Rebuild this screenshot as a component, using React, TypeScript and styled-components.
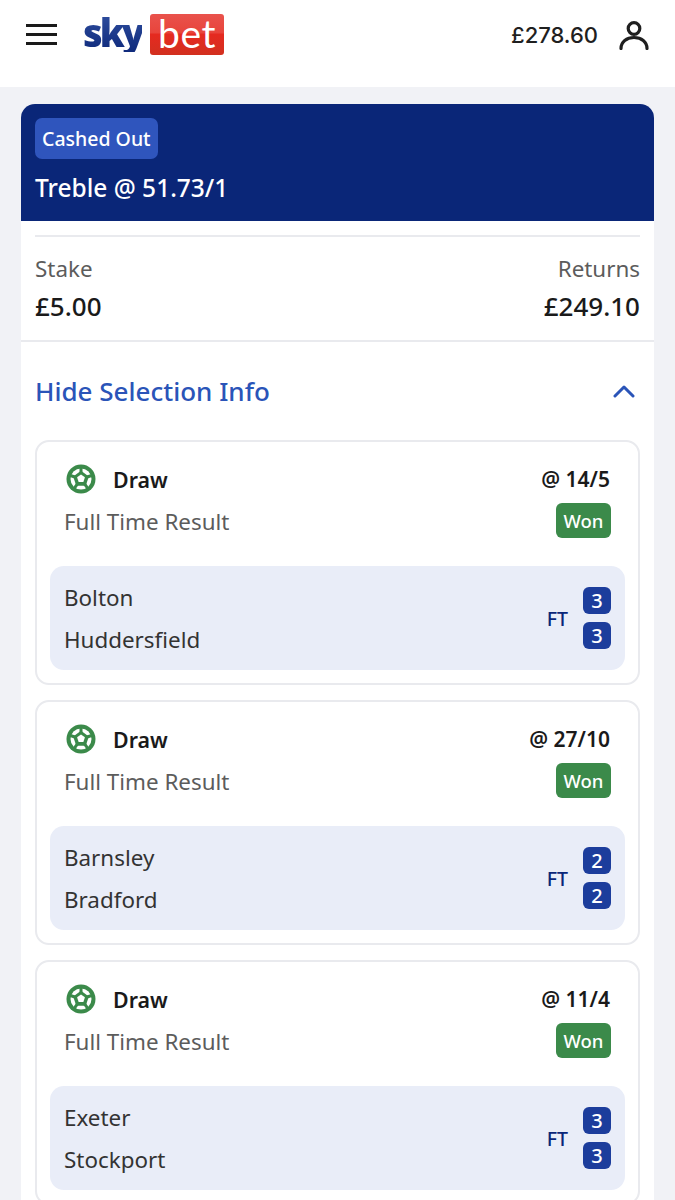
import React from "react";
import styled, { createGlobalStyle } from "styled-components";

const GlobalStyle = createGlobalStyle`
  html, body {
    margin: 0;
    padding: 0;
    height: 1200px;
    overflow: hidden;
    background: #f1f2f6;
    font-family: "Noto Sans", "Open Sans", sans-serif;
    color: #1a1a1a;
  }
`;

const Header = styled.header`
  height: 87px;
  background: #fff;
  display: flex;
  align-items: center;
  padding: 0 26px 18px 26px;
  box-sizing: border-box;
`;

const Burger = styled.div`
  width: 31px;
  height: 21px;
  display: flex;
  flex-direction: column;
  justify-content: space-between;
  margin-right: 26px;

  & > span {
    height: 3px;
    background: #1a1a1a;
  }
`;

const Logo = styled.div`
  display: flex;
  align-items: center;
  gap: 8px;
`;

const SkyWord = styled.span`
  width: 59px;
  font-family: "Open Sans", sans-serif;
  font-weight: 800;
  font-size: 38px;
  line-height: 40px;
  letter-spacing: -3px;
  color: #1c3a8c;
  background: linear-gradient(180deg, #2f4f9f 0%, #0f2a7c 100%);
  -webkit-background-clip: text;
  background-clip: text;
  -webkit-text-fill-color: transparent;
  margin-top: -6px;
`;

const BetWord = styled.span`
  width: 74px;
  height: 41px;
  border-radius: 3px;
  background: linear-gradient(180deg, #e9524c 0%, #e8453c 45%, #e52a20 50%, #d2301f 100%);
  color: #fff;
  font-family: "Lato", sans-serif;
  font-size: 39px;
  font-weight: 400;
  line-height: 38px;
  letter-spacing: 0.5px;
  text-align: center;
`;

const HeaderRight = styled.div`
  margin-left: auto;
  display: flex;
  align-items: center;
  gap: 21px;
`;

const Balance = styled.span`
  font-family: "Inter", sans-serif;
  font-size: 22px;
  font-weight: 500;
  color: #1f1f1f;
`;

const Content = styled.main`
  padding: 17px 21px 0;
`;

const BetCard = styled.section`
  background: #fff;
  border-radius: 14px 14px 0 0;
  overflow: hidden;
`;

const BetHead = styled.div`
  height: 117px;
  background: #0a2678;
  padding: 14px 14px 0;
  box-sizing: border-box;
`;

const StatusPill = styled.span`
  display: inline-block;
  height: 41px;
  line-height: 41px;
  padding: 0 7px;
  border-radius: 7px;
  background: #2f55bd;
  color: #fff;
  font-size: 19.5px;
  font-weight: 500;
`;

const BetTitle = styled.div`
  margin-top: 12px;
  color: #fff;
  font-size: 24.5px;
  line-height: 34px;
  font-weight: 500;
`;

const BetBody = styled.div`
  padding: 14px 14px 0;
`;

const Rule = styled.div`
  height: 2px;
  background: #e9eaee;
`;

const Totals = styled.div`
  display: flex;
  justify-content: space-between;
  height: 103px;
  padding-top: 16px;
  box-sizing: border-box;
`;

const TotalCol = styled.div<{ $right?: boolean }>`
  text-align: ${({ $right }) => ($right ? "right" : "left")};
`;

const TotalLabel = styled.div`
  font-size: 22.4px;
  line-height: 32px;
  color: #5c5c5c;
`;

const TotalValue = styled.div`
  font-size: 26px;
  line-height: 42px;
  font-weight: 500;
  color: #1a1a1a;
`;

const FullRule = styled(Rule)`
  margin: 0 -14px;
`;

const Toggle = styled.div`
  display: flex;
  align-items: center;
  justify-content: space-between;
  height: 98px;
  color: #2a54b8;
  font-size: 26px;
  font-weight: 500;
  padding-right: 4px;
`;

const Selections = styled.div`
  display: flex;
  flex-direction: column;
  gap: 15px;
`;

const Selection = styled.article`
  height: 245px;
  border: 2px solid #e9eaee;
  border-radius: 14px;
  box-sizing: border-box;
  padding: 0 13px;
`;

const SelectionTop = styled.div`
  display: flex;
  justify-content: space-between;
  height: 124px;
  padding: 17px 14px 0;
  box-sizing: border-box;
`;

const PickRow = styled.div`
  display: flex;
  align-items: center;
  gap: 17px;
  height: 40px;
  padding-left: 2px;
`;

const PickName = styled.span`
  font-size: 21.4px;
  font-weight: 600;
  color: #1a1a1a;
`;

const Market = styled.div`
  margin-top: 2px;
  font-size: 22.4px;
  line-height: 42px;
  color: #5c5c5c;
`;

const PriceCol = styled.div`
  display: flex;
  flex-direction: column;
  align-items: flex-end;
`;

const Price = styled.div`
  height: 40px;
  line-height: 40px;
  font-size: 21px;
  font-weight: 600;
  color: #1a1a1a;
  margin-right: 1px;
`;

const WonBadge = styled.span`
  margin-top: 4px;
  width: 55px;
  height: 35px;
  line-height: 35px;
  text-align: center;
  background: #3b8a4a;
  color: #fff;
  border-radius: 6px;
  font-size: 18.5px;
  font-weight: 500;
`;

const Match = styled.div`
  height: 104px;
  border-radius: 14px;
  background: #e9edf8;
  display: flex;
  align-items: center;
  justify-content: space-between;
  padding: 0 14px;
`;

const Teams = styled.div`
  padding-top: 2px;
  font-size: 22.4px;
  line-height: 42px;
  color: #333;
`;

const ScoreBlock = styled.div`
  display: flex;
  align-items: center;
  gap: 15px;
`;

const FullTime = styled.span`
  font-size: 19.5px;
  font-weight: 500;
  color: #0a2678;
`;

const Scores = styled.div`
  display: flex;
  flex-direction: column;
  gap: 8px;
`;

const Score = styled.span`
  width: 28px;
  height: 27px;
  line-height: 27px;
  border-radius: 6px;
  background: #1c3d9c;
  color: #fff;
  text-align: center;
  font-size: 20px;
  font-weight: 500;
`;

// green disc, white inner field, green pentagon and spokes on top
const BallIcon = () => (
  <svg width="30" height="30" viewBox="0 0 30 30">
    <circle cx="15" cy="15" r="14.5" fill="#3b8a4a" />
    <circle cx="15" cy="15" r="10.5" fill="#fff" />
    <path
      d="M15 15V3M15 15L26.4 11.3M15 15l7 9.7M15 15l-7 9.7M15 15L3.6 11.3"
      stroke="#3b8a4a"
      strokeWidth="3"
    />
    <path d="M15 6.8l7.8 5.7-3 9.2h-9.6l-3-9.2z" fill="#3b8a4a" />
    <path d="M15 10.5l3.9 2.8-1.5 4.6h-4.8l-1.5-4.6z" fill="#fff" />
  </svg>
);

const PersonIcon = () => (
  <svg width="30" height="30" viewBox="0 0 30 30" fill="none" stroke="#1f1f1f" strokeWidth="3.2" strokeLinecap="round">
    <circle cx="15" cy="8.5" r="5.8" />
    <path d="M2 28.5c0-6.8 5.6-11 13-11s13 4.2 13 11" />
  </svg>
);

const ChevronUp = () => (
  <svg width="24" height="14" viewBox="0 0 24 14" fill="none" stroke="#2a54b8" strokeWidth="3" strokeLinecap="round" strokeLinejoin="round">
    <path d="M3 12l9-9 9 9" />
  </svg>
);

const selections = [
  { price: "14/5", home: "Bolton", away: "Huddersfield", homeScore: 3, awayScore: 3 },
  { price: "27/10", home: "Barnsley", away: "Bradford", homeScore: 2, awayScore: 2 },
  { price: "11/4", home: "Exeter", away: "Stockport", homeScore: 3, awayScore: 3 },
];

export default function App(): React.ReactElement {
  return (
    <>
      <GlobalStyle />
      <Header>
        <Burger>
          <span />
          <span />
          <span />
        </Burger>
        <Logo>
          <SkyWord>sky</SkyWord>
          <BetWord>bet</BetWord>
        </Logo>
        <HeaderRight>
          <Balance>£278.60</Balance>
          <PersonIcon />
        </HeaderRight>
      </Header>
      <Content>
        <BetCard>
          <BetHead>
            <StatusPill>Cashed Out</StatusPill>
            <BetTitle>Treble @ 51.73/1</BetTitle>
          </BetHead>
          <BetBody>
            <Rule />
            <Totals>
              <TotalCol>
                <TotalLabel>Stake</TotalLabel>
                <TotalValue>£5.00</TotalValue>
              </TotalCol>
              <TotalCol $right>
                <TotalLabel>Returns</TotalLabel>
                <TotalValue>£249.10</TotalValue>
              </TotalCol>
            </Totals>
            <FullRule />
            <Toggle>
              <span>Hide Selection Info</span>
              <ChevronUp />
            </Toggle>
            <Selections>
              {selections.map((s) => (
                <Selection key={s.home}>
                  <SelectionTop>
                    <div>
                      <PickRow>
                        <BallIcon />
                        <PickName>Draw</PickName>
                      </PickRow>
                      <Market>Full Time Result</Market>
                    </div>
                    <PriceCol>
                      <Price>@ {s.price}</Price>
                      <WonBadge>Won</WonBadge>
                    </PriceCol>
                  </SelectionTop>
                  <Match>
                    <Teams>
                      <div>{s.home}</div>
                      <div>{s.away}</div>
                    </Teams>
                    <ScoreBlock>
                      <FullTime>FT</FullTime>
                      <Scores>
                        <Score>{s.homeScore}</Score>
                        <Score>{s.awayScore}</Score>
                      </Scores>
                    </ScoreBlock>
                  </Match>
                </Selection>
              ))}
            </Selections>
          </BetBody>
        </BetCard>
      </Content>
    </>
  );
}
